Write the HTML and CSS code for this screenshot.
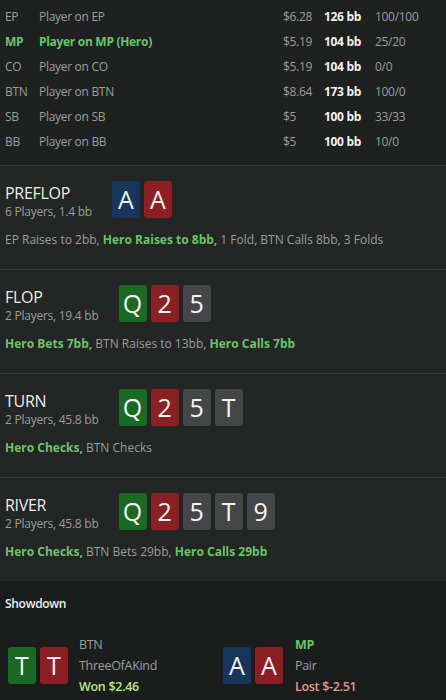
FILE: index.html
```html
<!DOCTYPE html>
<html>
<head>
<meta charset="utf-8">
<link rel="stylesheet" href="styles.css">
</head>
<body>
<div class="page">
  <div class="players">
    <div class="prow"><span class="pos">EP</span><span class="pname">Player on EP</span><span class="usd">$6.28</span><span class="bb">126 bb</span><span class="stat">100/100</span></div>
    <div class="prow hero"><span class="pos">MP</span><span class="pname">Player on MP (Hero)</span><span class="usd">$5.19</span><span class="bb">104 bb</span><span class="stat">25/20</span></div>
    <div class="prow"><span class="pos">CO</span><span class="pname">Player on CO</span><span class="usd">$5.19</span><span class="bb">104 bb</span><span class="stat">0/0</span></div>
    <div class="prow"><span class="pos">BTN</span><span class="pname">Player on BTN</span><span class="usd">$8.64</span><span class="bb">173 bb</span><span class="stat">100/0</span></div>
    <div class="prow"><span class="pos">SB</span><span class="pname">Player on SB</span><span class="usd">$5</span><span class="bb">100 bb</span><span class="stat">33/33</span></div>
    <div class="prow"><span class="pos">BB</span><span class="pname">Player on BB</span><span class="usd">$5</span><span class="bb">100 bb</span><span class="stat">10/0</span></div>
  </div>

  <div class="street">
    <div class="shead">
      <div class="stitle"><div class="sname">PREFLOP</div><div class="ssub">6 Players, 1.4 bb</div></div>
      <div class="cards"><span class="card blue">A</span><span class="card red">A</span></div>
    </div>
    <div class="actions">EP Raises to 2bb, <b class="h">Hero Raises to 8bb,</b> 1 Fold, BTN Calls 8bb, 3 Folds</div>
  </div>

  <div class="street">
    <div class="shead">
      <div class="stitle"><div class="sname">FLOP</div><div class="ssub">2 Players, 19.4 bb</div></div>
      <div class="cards"><span class="card green">Q</span><span class="card red">2</span><span class="card gray">5</span></div>
    </div>
    <div class="actions"><b class="h">Hero Bets 7bb,</b> BTN Raises to 13bb, <b class="h">Hero Calls 7bb</b></div>
  </div>

  <div class="street">
    <div class="shead">
      <div class="stitle"><div class="sname">TURN</div><div class="ssub">2 Players, 45.8 bb</div></div>
      <div class="cards"><span class="card green">Q</span><span class="card red">2</span><span class="card gray">5</span><span class="card gray">T</span></div>
    </div>
    <div class="actions"><b class="h">Hero Checks,</b> BTN Checks</div>
  </div>

  <div class="street">
    <div class="shead">
      <div class="stitle"><div class="sname">RIVER</div><div class="ssub">2 Players, 45.8 bb</div></div>
      <div class="cards"><span class="card green">Q</span><span class="card red">2</span><span class="card gray">5</span><span class="card gray">T</span><span class="card gray">9</span></div>
    </div>
    <div class="actions"><b class="h">Hero Checks,</b> BTN Bets 29bb, <b class="h">Hero Calls 29bb</b></div>
  </div>

  <div class="showdown">
    <div class="sdtitle">Showdown</div>
    <div class="sdrow">
      <div class="sdplayer">
        <div class="cards"><span class="card green">T</span><span class="card red">T</span></div>
        <div class="sdinfo"><div class="sdpos">BTN</div><div class="sdhand">ThreeOfAKind</div><div class="won">Won $2.46</div></div>
      </div>
      <div class="sdplayer">
        <div class="cards"><span class="card blue">A</span><span class="card red">A</span></div>
        <div class="sdinfo"><div class="sdpos hero">MP</div><div class="sdhand">Pair</div><div class="lost">Lost $-2.51</div></div>
      </div>
    </div>
  </div>
</div>
</body>
</html>
```

FILE: styles.css
```css
* { box-sizing: border-box; }
html, body { margin: 0; padding: 0; }
body {
  background: #1b1d1c;
  font-family: "Open Sans", "Noto Sans", sans-serif;
  font-size: 12px;
  color: #9b9d9d;
  width: 446px;
  height: 700px;
  overflow: hidden;
}
.page { width: 446px; }

.players {
  background: #1f2121;
  padding: 4px 0 11px 0;
}
.prow {
  display: grid;
  grid-template-columns: 34px 244px 41px 51px 1fr;
  height: 25px;
  align-items: center;
  padding-left: 5px;
  letter-spacing: -0.3px;
}
.prow .bb { color: #f2f2f2; font-weight: 700; }
.prow.hero .pos, .prow.hero .pname { color: #6ac46a; font-weight: 700; }

.street {
  background: #232625;
  border-top: 1px solid #393c3b;
  padding: 15px 5px 23px 5px;
  height: 104px;
}
.shead { display: flex; align-items: flex-start; gap: 20px; }
.stitle { margin-top: 1px; }
.sname { font-size: 16px; line-height: 22px; color: #ececec; letter-spacing: -0.3px; }
.ssub { font-size: 12px; line-height: 16px; color: #9b9d9d; letter-spacing: -0.25px; }
.cards { display: flex; gap: 4px; }
.card {
  width: 28px;
  height: 37px;
  border-radius: 3px;
  color: #f4f4f4;
  font-size: 25px;
  line-height: 37px;
  text-align: center;
  font-family: "Open Sans", "Noto Sans", sans-serif;
}
.card.blue { background: #17365a; }
.card.red { background: #8a1f24; }
.card.green { background: #1a6a25; }
.card.gray { background: #444647; }

.actions { margin-top: 12px; line-height: 16px; letter-spacing: 0; }
.h { color: #6ac46a; font-weight: 700; }

.showdown {
  background: #1b1d1c;
  padding: 15px 8px 0 8px;
}
.sdtitle { color: #ececec; font-weight: 600; line-height: 16px; margin-left: -3px; letter-spacing: -0.3px; }
.sdrow { display: flex; margin-top: 22px; }
.sdplayer { display: flex; align-items: center; gap: 11px; width: 218px; }
.sdplayer + .sdplayer { gap: 12px; }
.sdinfo { line-height: 21px; font-size: 12.5px; letter-spacing: -0.3px; }
.sdpos.hero { color: #6ac46a; font-weight: 700; }
.won { color: #b7e48e; font-weight: 600; }
.lost { color: #e59793; font-weight: 600; }
```
